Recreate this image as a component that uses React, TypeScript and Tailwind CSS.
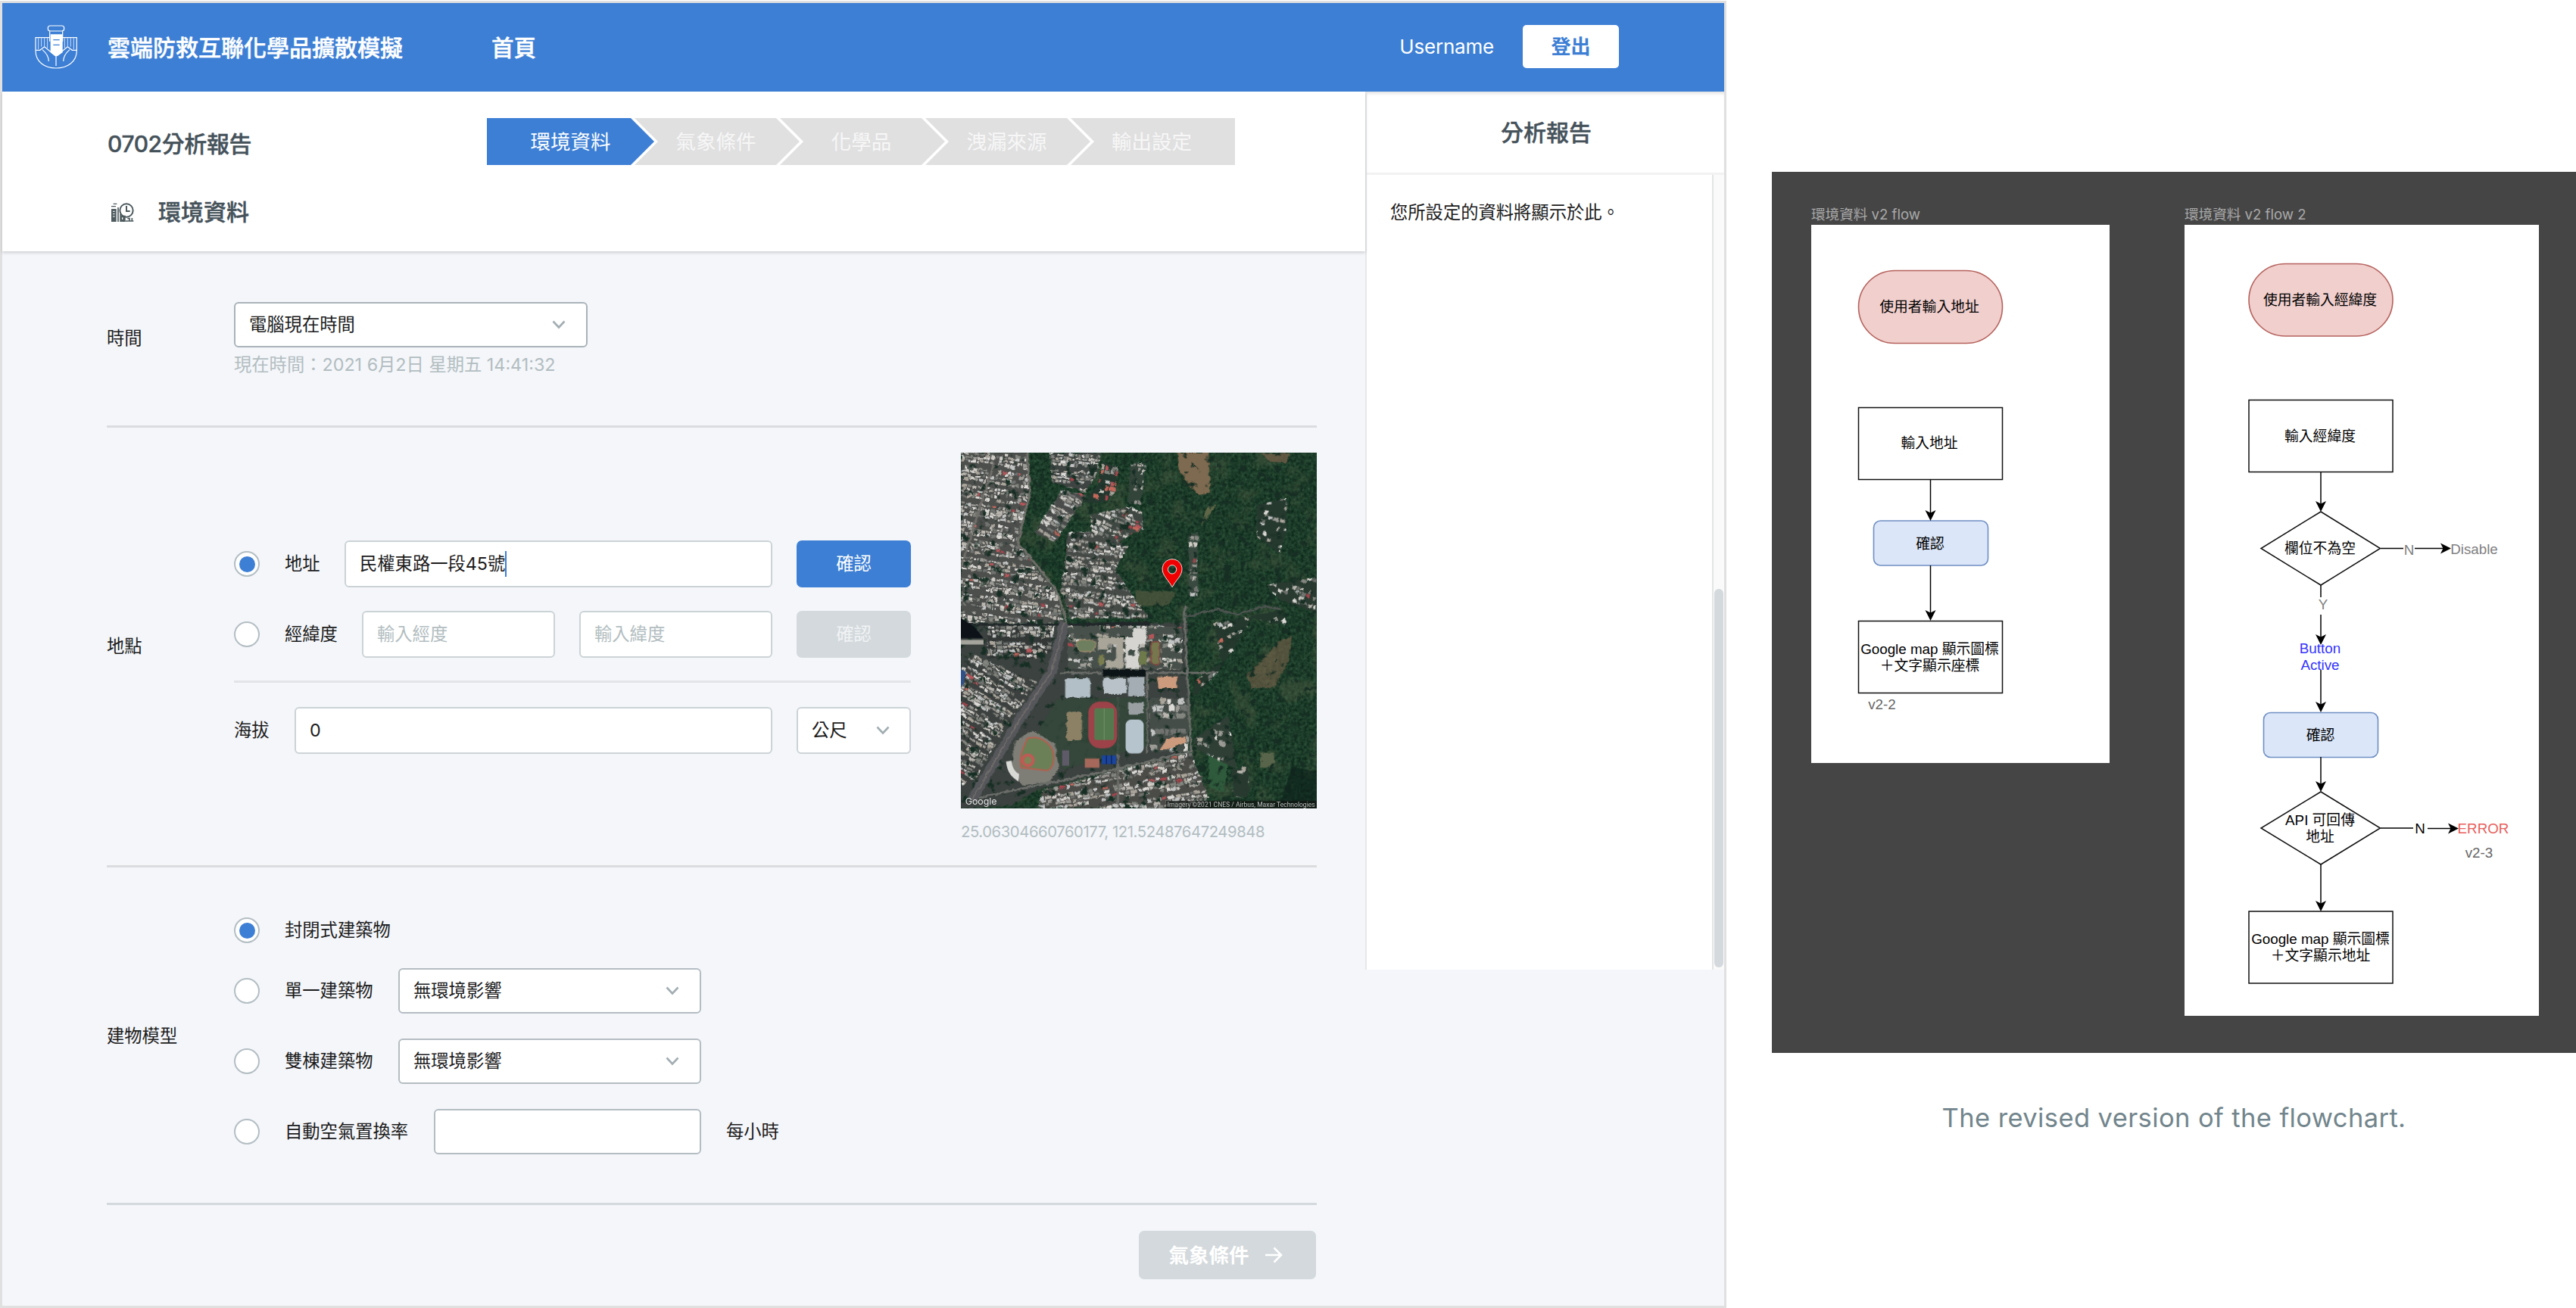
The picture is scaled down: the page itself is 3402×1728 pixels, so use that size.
import type { ReactNode } from "react";

const steps = ["環境資料", "氣象條件", "化學品", "洩漏來源", "輸出設定"];

/* ---------- icons ---------- */

function Logo() {
  return (
    <svg width="58" height="60" viewBox="48 39 174 180" fill="none" stroke="#fff" strokeWidth="3.600" className="shrink-0">
      <rect x="100" y="45" width="64" height="21" rx="9" />
      <path d="M107 67v40M158 67v40" />
      <path d="M110 79h48v72l-20 14h-10l-18-14z" fill="#fff" stroke="none" />
      <path d="M121 101h25M121 121h25" stroke="#3d7fd5" strokeWidth="4" />
      <path d="M106 92H51v52c0 44 36 69 81 69s82-25 82-69V92h-55" />
      <path d="M62 94v44M74 94v34M86 94v32M98 94v40M166 94v40M178 94v32M190 94v34M202 94v44" strokeWidth="3" strokeOpacity=".75" />
      <path d="M52 142h16l18-14 46 38 46-38 18 14h17M78 140c14 12 25 24 25 46M186 140c-14 12-25 24-25 46M132 166v38" />
    </svg>
  );
}

function ReportIcon() {
  return (
    <svg width="30" height="25" viewBox="0 0 90 75" fill="none" stroke="#4d5a5e" strokeWidth="6" className="ml-[5px] shrink-0">
      <circle cx="60" cy="30" r="26" />
      <path d="M60 12v21h14" />
      <path d="M8 4h14M0 14h18" strokeWidth="4" />
      <path d="M0 24h20v51H0z" fill="#4d5a5e" stroke="none" />
      <path d="M6 34h8M6 44h8M6 54h8" stroke="#fff" strokeWidth="3" />
      <path d="M27 18v57M36 45v30" strokeWidth="5" />
      <path d="M38 50h18v25H38z" fill="#4d5a5e" stroke="none" />
      <path d="M44 58v8" stroke="#fff" strokeWidth="4" />
      <path d="M56 72h32M64 62h8v10M82 60v14" strokeWidth="5" />
    </svg>
  );
}

function Chevron() {
  return (
    <svg width="18" height="12" viewBox="0 0 18 12" fill="none" stroke="#a3aeb3" strokeWidth="2.600" className="shrink-0">
      <path d="M1.500 1.500 9 9.500l7.500-8" />
    </svg>
  );
}

/* ---------- form controls ---------- */

function Radio({ on }: { on?: boolean }) {
  return (
    <span className="mr-[33px] flex size-[34px] shrink-0 items-center justify-center rounded-full border-2 border-[#b3bec3] bg-white">
      {on && <span className="size-[21px] rounded-full bg-[#3d7fd5]" />}
    </span>
  );
}

function Field({ className, children }: { className: string; children?: ReactNode }) {
  return (
    <div className={`flex shrink-0 items-center rounded-[6px] border-2 bg-white pl-[18px] ${className}`}>{children}</div>
  );
}

function Rule({ className }: { className: string }) {
  return <div className={`h-[3px] shrink-0 ${className}`} />;
}

/* ---------- satellite map ---------- */

function makeRandom(seed: number) {
  let s = seed;
  return () => {
    s = (s * 1664525 + 1013904223) % 4294967296;
    return s / 4294967296;
  };
}

type District = { pts: string; box: [number, number, number, number]; angle: number; cell: [number, number]; base: string; red?: number; fill?: number };

const districts: District[] = [
  { pts: "26,24 292,24 300,180 250,370 330,480 410,570 436,690 26,690", box: [26, 24, 440, 690], angle: 8, cell: [19, 14], base: "#4d4f4d" },
  { pts: "376,24 582,24 570,100 520,180 390,140", box: [370, 20, 590, 190], angle: 4, cell: [20, 13], base: "#3e4442" },
  { pts: "425,170 525,190 400,375 318,335", box: [310, 160, 530, 380], angle: 33, cell: [34, 12], base: "#494c4a" },
  { pts: "450,335 560,330 690,390 640,480 720,600 775,670 460,672 420,560 440,450", box: [415, 325, 780, 680], angle: 7, cell: [21, 13], base: "#464a47" },
  { pts: "540,265 690,235 745,250 750,320 640,380 545,330", box: [540, 235, 760, 385], angle: 24, cell: [24, 14], base: "#3f4742", red: 0.3 },
  { pts: "130,702 400,700 385,800 310,830 130,830", box: [130, 700, 405, 830], angle: 1, cell: [22, 15], base: "#333837" },
  { pts: "70,810 330,920 200,1100 90,1290 26,1330 26,870", box: [26, 800, 340, 1330], angle: 31, cell: [27, 13], base: "#3c403e" },
  { pts: "350,1340 600,1275 940,1195 1010,1370 960,1413 330,1413", box: [330, 1190, 1015, 1413], angle: -9, cell: [25, 15], base: "#4b4b48" },
  { pts: "450,700 820,700 905,705 905,870 450,870", box: [450, 700, 905, 870], angle: 0, cell: [24, 19], base: "#48504b", fill: 0.6 },
  { pts: "770,980 930,985 930,1190 780,1190", box: [770, 980, 935, 1190], angle: 0, cell: [34, 30], base: "#454d49", fill: 0.5 },
  { pts: "590,60 650,80 640,180 590,220 510,220 570,150", box: [500, 60, 660, 230], angle: 10, cell: [20, 20], base: "#24382f", red: 0.35, fill: 0.5 },
  { pts: "700,70 760,60 740,230 690,220", box: [690, 60, 765, 240], angle: 10, cell: [16, 16], base: "#33443b", fill: 0.5 },
  { pts: "1200,230 1320,200 1320,330 1290,420 1200,350", box: [1200, 190, 1330, 420], angle: 15, cell: [17, 17], base: "#26392f", fill: 0.45 },
  { pts: "930,340 970,335 965,580 930,590", box: [930, 330, 975, 600], angle: 5, cell: [20, 22], base: "#3a4a41", fill: 0.4 },
  { pts: "1240,540 1438,510 1438,650 1290,600", box: [1220, 510, 1438, 660], angle: 18, cell: [20, 17], base: "#293a31", fill: 0.42 },
  { pts: "1030,690 1290,640 1330,700 1180,670 1110,790 1030,900 950,980 950,920 1060,840", box: [940, 630, 1340, 990], angle: -25, cell: [22, 18], base: "#24382d", fill: 0.42, red: 0.18 },
  { pts: "950,1140 1090,1050 1120,1260 960,1180", box: [945, 1040, 1130, 1270], angle: 12, cell: [22, 20], base: "#2f3f36", fill: 0.42 },
  { pts: "1100,1260 1170,1250 1170,1370 1110,1370", box: [1090, 1240, 1180, 1380], angle: 12, cell: [22, 20], base: "#283a30", fill: 0.38 },
];

const roofs = ["#b9b6af", "#9c9b96", "#cfccc6", "#83857f", "#aaa59b", "#c2c4c3", "#70736f", "#dcdad6"];
const redRoofs = ["#b5565a", "#c4685c", "#a3454c"];

function DistrictShapes({ d, index }: { d: District; index: number }) {
  const rnd = makeRandom(index * 977 + 13);
  const [x0, y0, x1, y1] = d.box;
  const cx = (x0 + x1) / 2;
  const cy = (y0 + y1) / 2;
  const r = Math.hypot(x1 - x0, y1 - y0) / 2;
  const [cw, ch] = d.cell;
  const rects: ReactNode[] = [];
  let row = 0;
  for (let y = -r; y < r; y += ch, row++) {
    if (row % 5 === 4) continue;
    let x = -r + rnd() * cw;
    while (x < r) {
      const w = cw * (0.35 + rnd() * 0.8);
      const red = rnd();
      const keep = rnd() < (d.fill ?? 0.86);
      const tone = roofs[Math.floor(rnd() * roofs.length)];
      const redTone = redRoofs[Math.floor(rnd() * redRoofs.length)];
      const h = ch * (0.5 + rnd() * 0.45);
      const inside = cx + x > x0 - 160 && cx + x < x1 + 160 && cy + y > y0 - 160 && cy + y < y1 + 160;
      if (keep && inside) {
        rects.push(
          <rect key={`${row}-${rects.length}`} x={+x.toFixed(1)} y={+(y + (rnd() - 0.5) * 5).toFixed(1)} width={+w.toFixed(1)} height={+h.toFixed(1)} fill={red < (d.red ?? 0.03) ? redTone : tone} />,
        );
      }
      x += w + 1.5 + rnd() * 5;
    }
  }
  return (
    <g clipPath={`url(#district-${index})`}>
      <polygon points={d.pts} fill={d.base} />
      <g transform={`translate(${cx} ${cy}) rotate(${d.angle})`}>{rects}</g>
    </g>
  );
}

function SatelliteMap() {
  return (
    <svg width="470" height="470" viewBox="26 24 1413 1389" preserveAspectRatio="none" className="block">
      <defs>
        {districts.map((d, i) => (
          <clipPath key={i} id={`district-${i}`}>
            <polygon points={d.pts} />
          </clipPath>
        ))}
        <filter id="canopy" x="0" y="0" width="100%" height="100%" colorInterpolationFilters="sRGB">
          <feTurbulence type="fractalNoise" baseFrequency="0.08" numOctaves="3" seed="4" />
          <feColorMatrix values="0.2 0 0 0 0.01  0.26 0 0 0 0.105  0.2 0 0 0 0.06  0 0 0 0 1" />
        </filter>
        <filter id="patches" x="0" y="0" width="100%" height="100%" colorInterpolationFilters="sRGB">
          <feTurbulence type="fractalNoise" baseFrequency="0.01" numOctaves="5" seed="9" />
          <feColorMatrix values="0 0 0 0 0.33  0 0 0 0 0.38  0 0 0 0 0.28  4 0 0 0 -2.100" />
        </filter>
        <filter id="groves" x="0" y="0" width="100%" height="100%" colorInterpolationFilters="sRGB">
          <feTurbulence type="fractalNoise" baseFrequency="0.03" numOctaves="3" seed="21" />
          <feColorMatrix values="0 0 0 0 0.09  0 0 0 0 0.18  0 0 0 0 0.14  0 8 0 0 -4.900" />
        </filter>
        <filter id="ragged" x="-10%" y="-10%" width="120%" height="120%" colorInterpolationFilters="sRGB">
          <feTurbulence type="fractalNoise" baseFrequency="0.05" numOctaves="3" seed="2" />
          <feDisplacementMap in="SourceGraphic" scale="14" xChannelSelector="R" yChannelSelector="G" />
        </filter>
      </defs>
      <rect x="26" y="24" width="1413" height="1389" fill="#1d3c2b" />
      <rect x="26" y="24" width="1413" height="1389" filter="url(#canopy)" />
      <rect x="26" y="24" width="1413" height="1389" filter="url(#patches)" opacity=".4" />
      <g filter="url(#ragged)">
        <path d="M885 24h125l5 155-40 10-40-30-40-60z" fill="#7e6a50" />
        <path d="M1040 230l-60 80 20-70z" fill="#5f6748" />
        <path d="M1290 760l50-20-10 90-60 110-90 5-20-50 60-60z" fill="#715f48" opacity=".65" />
        <path d="M1220 30l110-6-10 40-70-5z" fill="#705e49" opacity=".8" />
        <path d="M720 560l160 10-30 50-130 5z" fill="#4c553d" opacity=".8" />
        <rect x="1215" y="1195" width="55" height="58" fill="#59654a" />
        <path d="M1010 1200l80 20-20 130-60-20z" fill="#2f5a3b" />
        {/* streets and campus ground */}
        <path d="M26 690h900v500L330 1340l-100 60-204 13z" fill="#3b423f" />
        <path d="M26 690h420l330-8v18H26z" fill="#22282a" />
        {districts.map((d, i) => (
          <DistrictShapes key={i} d={d} index={i} />
        ))}
        <rect x="26" y="24" width="1413" height="1389" filter="url(#groves)" />
        <path d="M290 24l10 160-48 190 150 180 40 110v40M160 60L26 470" fill="none" stroke="#716f6a" strokeWidth="9" />
        <path d="M436 690l-50 190-130 190L70 1380" fill="none" stroke="#56575a" strokeWidth="38" />
        <path d="M436 690l-50 190-130 190L70 1380" fill="none" stroke="#7b7572" strokeWidth="4" />
        <path d="M420 884h620M915 620v70l25 500-300 70-540 110M765 880v320M650 980v420" fill="none" stroke="#6b6d69" strokeWidth="9" />
        <path d="M915 665l130-30 80 20 110-30 60 10" fill="none" stroke="#4c5450" strokeWidth="8" />
        {/* campus */}
        <path d="M410 985l355-5v190l-330 90-120-120z" fill="#35483b" opacity=".8" />
        <path d="M590 872h170v26H590z" fill="#0d1417" />
        <rect x="440" y="905" width="100" height="75" fill="#b3bfc7" />
        <rect x="592" y="906" width="92" height="60" fill="#b9c2c8" />
        <rect x="690" y="900" width="65" height="75" fill="#a4adb3" />
        <rect x="690" y="1000" width="62" height="44" fill="#9a9fa1" />
        <path d="M680 745h30v-35h52v62h-30v93h-52z" fill="#d5d4d0" />
        <rect x="690" y="795" width="28" height="20" fill="#3f4b45" />
        <path d="M570 745h100v120h-68v-30h40v-62h-30v20h-42z" fill="#a9a599" />
        <rect x="485" y="755" width="75" height="45" rx="22" fill="#6d7f5e" stroke="#95876a" strokeWidth="5" />
        <rect x="780" y="762" width="34" height="90" rx="15" fill="#77774e" stroke="#7b4a41" strokeWidth="6" />
        <rect x="735" y="800" width="30" height="52" fill="#6f7a4b" />
        <rect x="572" y="815" width="22" height="36" fill="#7a7d4d" />
        <path d="M805 898h80v45h-75z" fill="#cc9a7c" />
        <path d="M845 1140l72-8v24l-75 26h-25z" fill="#cc9a7c" />
        <rect x="445" y="1035" width="62" height="112" rx="12" fill="#8d8165" />
        <path d="M240 1150l70-40 90 50 15 100-40 50-100 15-50-60z" fill="#7e7d76" />
      </g>
      <rect x="532" y="996" width="114" height="182" rx="46" fill="#9d4248" />
      <rect x="556" y="1022" width="78" height="124" rx="8" fill="#55794f" />
      <path d="M595 1022v124" stroke="#7f9c78" strokeWidth="2" />
      <rect x="680" y="1066" width="72" height="132" rx="22" fill="#b6c4cd" />
      <path d="M290 1140c50-15 105 20 105 75 0 30-15 50-30 50l-100-12c-10-40 10-80 25-113z" fill="#6c8058" stroke="#b3604f" strokeWidth="6" />
      <circle cx="292" cy="1225" r="21" fill="#7e8457" stroke="#c05a55" strokeWidth="12" />
      <path d="M205 1230c5 40 20 60 50 78l2-30c-20-10-28-30-30-52z" fill="#d9d9d6" />
      <rect x="585" y="1206" width="58" height="34" fill="#1b449b" />
      <path d="M604 1206v34M624 1206v34" stroke="#0e2354" strokeWidth="4" />
      <rect x="518" y="1218" width="58" height="36" fill="#a6685a" />
      <rect x="428" y="1186" width="28" height="60" fill="#5f5a68" />
      <rect x="26" y="755" width="90" height="18" fill="#a6a59d" />
      <path d="M26 670l50 30 40 48H26z" fill="#0c1218" />
      <path d="M26 870l20 10-10 50-10 5z" fill="#2f5188" />
      <path d="M1340 1250l98 20v143h-150z" fill="#0b1f1a" opacity=".6" />
      <rect x="840" y="1383" width="599" height="30" fill="#101512" opacity=".72" />
      <path
        d="M865 440c-22 0-39 17-39 39 0 25 24 42 39 70 15-28 39-45 39-70 0-22-17-39-39-39zm0 23a17 17 0 1 1 0 34 17 17 0 0 1 0-34z"
        fill="#f00000"
        stroke="#fff"
        strokeWidth="2.500"
        fillRule="evenodd"
      />
      <text x="43" y="1398" fontSize="36" fill="#fff" fillOpacity=".85" fontFamily="Inter, sans-serif" textLength="126" lengthAdjust="spacingAndGlyphs">Google</text>
      <text x="846" y="1406" fontSize="25" fill="#b9bdbb" fontFamily="Roboto, sans-serif" textLength="586" lengthAdjust="spacingAndGlyphs">Imagery ©2021 CNES / Airbus, Maxar Technologies</text>
    </svg>
  );
}

/* ---------- flowchart ---------- */

/* A text line centred on (x, y) of the flow board. */
function Label({ x, y, children, className = "text-black" }: { x: number; y: number; children: ReactNode; className?: string }) {
  return (
    <span
      style={{ left: x, top: y }}
      className={`absolute -translate-x-1/2 -translate-y-1/2 font-['Liberation_Sans','Noto_Sans_CJK_TC',sans-serif] text-[18.8px] leading-[22px] whitespace-nowrap ${className}`}
    >
      {children}
    </span>
  );
}

function Arrow({ from, to }: { from: [number, number]; to: [number, number] }) {
  const vertical = from[0] === to[0];
  const [x, y] = to;
  const head = vertical ? `M${x} ${y}l-7-14 7 3.500 7-3.500z` : `M${x} ${y}l-14-7 3.500 7-3.500 7z`;
  return (
    <g>
      <path d={`M${from[0]} ${from[1]}L${vertical ? x : x - 8} ${vertical ? y - 8 : y}`} stroke="#000" strokeWidth="1.500" />
      <path d={head} fill="#000" />
    </g>
  );
}

const pink = { fill: "#f0cfcd", stroke: "#b5615c", strokeWidth: 1.6 };
const blue = { fill: "#dbe6f8", stroke: "#6f8fc4", strokeWidth: 1.6 };
const box = { fill: "#fff", stroke: "#111", strokeWidth: 1.5 };

function AddressFlow() {
  return (
    <div className="relative h-[711px] w-[394px] bg-white">
      <svg width="394" height="711" viewBox="2392 297 394 711" className="block">
        <rect x="2454.500" y="357.500" width="190" height="96" rx="48" {...pink} />
        <rect x="2454.500" y="538.500" width="190" height="95" {...box} />
        <rect x="2474.500" y="688" width="151" height="59" rx="9" {...blue} />
        <rect x="2454.500" y="820.500" width="190" height="95" {...box} />
        <Arrow from={[2549.5, 634]} to={[2549.5, 688]} />
        <Arrow from={[2549.5, 747]} to={[2549.5, 820]} />
      </svg>
      <Label x={156} y={109}>使用者輸入地址</Label>
      <Label x={156} y={289}>輸入地址</Label>
      <Label x={157} y={422}>確認</Label>
      <Label x={156.5} y={561}>Google map 顯示圖標</Label>
      <Label x={156.5} y={583}>＋文字顯示座標</Label>
      <Label x={93.5} y={634} className="text-[#666]">v2-2</Label>
    </div>
  );
}

function CoordinateFlow() {
  return (
    <div className="relative h-[1045px] w-[468px] bg-white">
      <svg width="468" height="1045" viewBox="2885 297 468 1045" className="block">
        <rect x="2970" y="348.500" width="190" height="95.500" rx="48" {...pink} />
        <rect x="2970" y="528.500" width="190" height="95" {...box} />
        <path d="M3065 676l78.500 48.500L3065 773l-79-48.500z" {...box} />
        <rect x="2989.500" y="941.500" width="151" height="59" rx="9" {...blue} />
        <path d="M3065 1046l78.500 48-78.500 48-79-48z" {...box} />
        <rect x="2970" y="1204" width="190" height="95" {...box} />
        <path d="M3065 773v16M3144 724.500h30M3144 1094h43" stroke="#000" strokeWidth="1.500" />
        <Arrow from={[3065, 624]} to={[3065, 676]} />
        <Arrow from={[3065, 812]} to={[3065, 852]} />
        <Arrow from={[3065, 885]} to={[3065, 941]} />
        <Arrow from={[3065, 1000]} to={[3065, 1046]} />
        <Arrow from={[3065, 1142]} to={[3065, 1204]} />
        <Arrow from={[3189, 724.5]} to={[3237, 724.5]} />
        <Arrow from={[3206, 1094.5]} to={[3247, 1094.5]} />
      </svg>
      <Label x={179} y={100}>使用者輸入經緯度</Label>
      <Label x={179} y={280}>輸入經緯度</Label>
      <Label x={179} y={428}>欄位不為空</Label>
      <Label x={296.5} y={430} className="text-[#808080]">N</Label>
      <Label x={382.5} y={429} className="text-[#808080]">Disable</Label>
      <Label x={183} y={502} className="text-[#808080]">Y</Label>
      <Label x={179} y={560} className="text-[#3333ff]">Button</Label>
      <Label x={179} y={582} className="text-[#3333ff]">Active</Label>
      <Label x={179.5} y={675}>確認</Label>
      <Label x={179} y={787}>API 可回傳</Label>
      <Label x={179} y={809}>地址</Label>
      <Label x={311} y={798}>N</Label>
      <Label x={394.5} y={798} className="text-[#e8605c]">ERROR</Label>
      <Label x={389} y={830} className="text-[#666]">v2-3</Label>
      <Label x={179.5} y={943.5}>Google map 顯示圖標</Label>
      <Label x={179.5} y={965.5}>＋文字顯示地址</Label>
    </div>
  );
}

/* ---------- page ---------- */

export default function App() {
  return (
    <div className="flex h-[1728px] w-[3402px] overflow-hidden bg-white pt-px font-['Inter','Noto_Sans_CJK_TC',sans-serif] text-[23.3px] leading-[34px] text-[#1c1c1c]">
      <div className="flex w-[2280px] shrink-0 flex-col border-3 border-[#e0e0e0] bg-[#f4f6fa]">
        <header className="flex h-[117px] shrink-0 items-center bg-[#3d7fd5] pb-[2px] pl-[43px] text-white">
          <Logo />
          <h1 className="ml-[38px] w-[507px] pt-[2px] text-[30px] font-medium [-webkit-text-stroke:0.45px]">雲端防救互聯化學品擴散模擬</h1>
          <span className="pt-[2px] text-[29.5px] font-medium [-webkit-text-stroke:0.45px]">首頁</span>
          <span className="ml-auto text-[26px] tracking-[-0.2px]">Username</span>
          <button className="mr-[139px] ml-[38px] h-[57px] w-[127px] rounded-[5px] bg-white text-[26px] font-bold text-[#3d7fd5]">登出</button>
        </header>

        <div className="flex flex-1">
          <main className="flex w-[1800px] shrink-0 flex-col">
            <div className="z-10 flex h-[211px] shrink-0 flex-col bg-white pt-[35px] pl-[139px] text-[#45525a] shadow-[0_2px_4px_rgba(0,0,0,0.16)]">
              <div className="flex h-[62px] items-center">
                <h2 className="w-[501px] pt-[6px] text-[30px] font-medium tracking-[-0.4px] [-webkit-text-stroke:0.4px]">0702分析報告</h2>
                <div className="flex h-[62px] text-[26.5px] text-white">
                  <div className="flex w-[221px] items-center justify-center bg-[#3d7fd5] [clip-path:polygon(0_0,calc(100%_-_31px)_0,100%_50%,calc(100%_-_31px)_100%,0_100%)]">{steps[0]}</div>
                  {steps.slice(1, 4).map((s) => (
                    <div key={s} className="-ml-[26px] flex w-[218px] items-center justify-center bg-[#e0e0e0] pr-[3px] text-[#f7f7f7] [clip-path:polygon(0_0,calc(100%_-_31px)_0,100%_50%,calc(100%_-_31px)_100%,0_100%,31px_50%)]">{s}</div>
                  ))}
                  <div className="-ml-[26px] flex w-[217px] items-center justify-center bg-[#e0e0e0] pr-[3px] text-[#f7f7f7] [clip-path:polygon(0_0,100%_0,100%_100%,0_100%,31px_50%)]">{steps[4]}</div>
                </div>
              </div>
              <div className="mt-[42px] flex h-[40px] items-center gap-[32px]">
                <ReportIcon />
                <h3 className="text-[30px] font-medium [-webkit-text-stroke:0.4px]">環境資料</h3>
              </div>
            </div>

            <div className="flex flex-col pr-[64px] pl-[138px]">
              <section className="flex h-[230px] items-center">
                <span className="w-[168px]">時間</span>
                <div className="pt-[3px]">
                  <Field className="h-[60px] w-[467px] justify-between border-[#a9b3b9] pr-[27px]">
                    電腦現在時間
                    <Chevron />
                  </Field>
                  <p className="mt-[6px] whitespace-nowrap text-[#b2bdc0]">現在時間：2021 6月2日 星期五 14:41:32</p>
                </div>
              </section>
              <Rule className="bg-[#dadcde]" />

              <section className="flex h-[578px]">
                <span className="w-[168px] self-center">地點</span>
                <div className="flex w-[894px] flex-col pt-[149px]">
                  <div className="flex h-[62px] items-center">
                    <Radio on />
                    <span className="w-[79px]">地址</span>
                    <Field className="h-[62px] w-[565px] border-[#ccd3d6]">
                      民權東路一段45號
                      <span className="h-[34px] w-[2px] bg-[#3d7fd5]" />
                    </Field>
                    <button className="ml-[32px] h-[62px] w-[151px] rounded-[7px] bg-[#3d7fd5] text-white">確認</button>
                  </div>
                  <div className="mt-[31px] flex h-[62px] items-center">
                    <Radio />
                    <span className="w-[102px]">經緯度</span>
                    <Field className="h-[62px] w-[255px] border-[#ccd3d6] text-[#b2bdc0]">輸入經度</Field>
                    <Field className="ml-[32px] h-[62px] w-[255px] border-[#ccd3d6] text-[#b2bdc0]">輸入緯度</Field>
                    <button className="ml-[32px] h-[62px] w-[151px] rounded-[7px] bg-[#d3d9dc] text-[#f1f3f5]">確認</button>
                  </div>
                  <Rule className="mt-[30px] bg-[#e2e5e8]" />
                  <div className="mt-[32px] flex h-[62px] items-center">
                    <span className="w-[80px]">海拔</span>
                    <Field className="h-[62px] w-[631px] border-[#ccd3d6]">0</Field>
                    <Field className="ml-[32px] h-[62px] w-[151px] justify-between border-[#ccd3d6] pr-[26px]">
                      公尺
                      <Chevron />
                    </Field>
                  </div>
                </div>
                <div className="ml-[66px] pt-[33px]">
                  <SatelliteMap />
                  <p className="mt-[14px] text-[20.3px] tracking-[-0.42px] whitespace-nowrap text-[#b2bdc0]">25.06304660760177, 121.52487647249848</p>
                </div>
              </section>
              <Rule className="bg-[#dadcde]" />

              <section className="flex h-[443px]">
                <span className="w-[168px] self-center pt-[3px]">建物模型</span>
                <div className="flex flex-col pt-[53px]">
                  <div className="flex h-[60px] items-center">
                    <Radio on />
                    封閉式建築物
                  </div>
                  <div className="mt-[20px] flex h-[60px] items-center">
                    <Radio />
                    <span className="w-[150px]">單一建築物</span>
                    <Field className="h-[60px] w-[400px] justify-between border-[#b4bdc2] pr-[27px]">
                      無環境影響
                      <Chevron />
                    </Field>
                  </div>
                  <div className="mt-[33px] flex h-[60px] items-center">
                    <Radio />
                    <span className="w-[150px]">雙棟建築物</span>
                    <Field className="h-[60px] w-[400px] justify-between border-[#b4bdc2] pr-[27px]">
                      無環境影響
                      <Chevron />
                    </Field>
                  </div>
                  <div className="mt-[33px] flex h-[60px] items-center">
                    <Radio />
                    <span className="w-[197px]">自動空氣置換率</span>
                    <Field className="h-[60px] w-[353px] border-[#b4bdc2]" />
                    <span className="ml-[33px]">每小時</span>
                  </div>
                </div>
              </section>
              <Rule className="bg-[#d3d9dc]" />

              <button className="mt-[34px] mr-px flex h-[64px] w-[234px] items-center justify-center gap-[20px] self-end rounded-[7px] bg-[#d3d9dc] pr-[5px] text-[26.5px] font-bold text-white">
                氣象條件
                <svg width="24" height="22" viewBox="0 0 24 22" fill="none" stroke="#fff" strokeWidth="2.600">
                  <path d="M1 11h21M12.500 1.500 22 11l-9.500 9.500" />
                </svg>
              </button>
            </div>
          </main>

          <aside className="flex h-[1160px] flex-1 flex-col border-l-2 border-[#e6e7e9] bg-white">
            <div className="flex h-[110px] shrink-0 items-center justify-center border-b-3 border-[#f2f2f2] shadow-[inset_0_5px_5px_-3px_rgba(0,0,0,0.14)]">
              <h2 className="pl-[2px] text-[30px] font-medium text-[#45525a] [-webkit-text-stroke:0.4px]">分析報告</h2>
            </div>
            <div className="flex flex-1">
              <p className="flex-1 pt-[33px] pl-[31px]">您所設定的資料將顯示於此。</p>
              <div className="flex w-[16px] justify-center border-l-2 border-[#e3e4e6] bg-[#fafafa] pt-[547px]">
                <div className="h-[500px] w-[12px] rounded-full bg-[#d3d9dc]" />
              </div>
            </div>
          </aside>
        </div>
      </div>

      <div className="ml-[60px] flex w-[1062px] shrink-0 flex-col pt-[226px]">
        <div className="flex h-[1164px] gap-[99px] bg-[#454545] pt-[45px] pl-[52px]">
          <div className="flex flex-col">
            <p className="h-[25px] text-[18.6px] leading-[22px] text-[#a9a9a9]">環境資料 v2 flow</p>
            <AddressFlow />
          </div>
          <div className="flex flex-col">
            <p className="h-[25px] text-[18.6px] leading-[22px] text-[#a9a9a9]">環境資料 v2 flow 2</p>
            <CoordinateFlow />
          </div>
        </div>
        <p className="mt-[62px] text-center text-[34.5px] leading-[48px] tracking-[0.4px] text-[#72858c]">The revised version of the flowchart.</p>
      </div>
    </div>
  );
}
